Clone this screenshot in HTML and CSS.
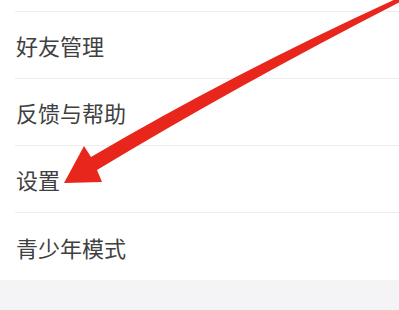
FILE: index.html
```html
<!DOCTYPE html>
<html lang="zh-CN">
<head>
<meta charset="utf-8">
<link rel="stylesheet" href="styles.css">
</head>
<body>
<div class="page">
  <div class="list">
    <div class="row row-top"></div>
    <div class="row"><span class="label">好友管理</span></div>
    <div class="row"><span class="label">反馈与帮助</span></div>
    <div class="row"><span class="label">设置</span></div>
    <div class="row row-last"><span class="label">青少年模式</span></div>
  </div>
  <div class="footer"></div>
  <svg class="arrow" width="399" height="310" viewBox="0 0 399 310">
    <path fill="#e8261c" d="M64,183 L84,146 L91,157 Q232,74 398,-2 L400,2 Q238,85 97,170 L102,182 Z"/>
  </svg>
</div>
</body>
</html>
```
FILE: styles.css
```css
html, body {
  margin: 0;
  padding: 0;
  background: #ffffff;
}
.page {
  position: relative;
  width: 399px;
  height: 310px;
  overflow: hidden;
  font-family: "Noto Sans CJK SC", "Noto Sans", sans-serif;
}
.list {
  display: flex;
  flex-direction: column;
  background: #ffffff;
}
.row {
  height: 66px;
  margin-left: 15px;
  padding-left: 1px;
  border-bottom: 1px solid #ededed;
  display: flex;
  align-items: center;
}
.row-top {
  height: 11px;
}
.row-last {
  height: 67px;
  border-bottom: none;
}
.label {
  font-size: 22px;
  color: #404040;
  line-height: 1;
}
.footer {
  height: 30px;
  background: #f4f4f6;
}
.arrow {
  position: absolute;
  left: 0;
  top: 0;
}
```
